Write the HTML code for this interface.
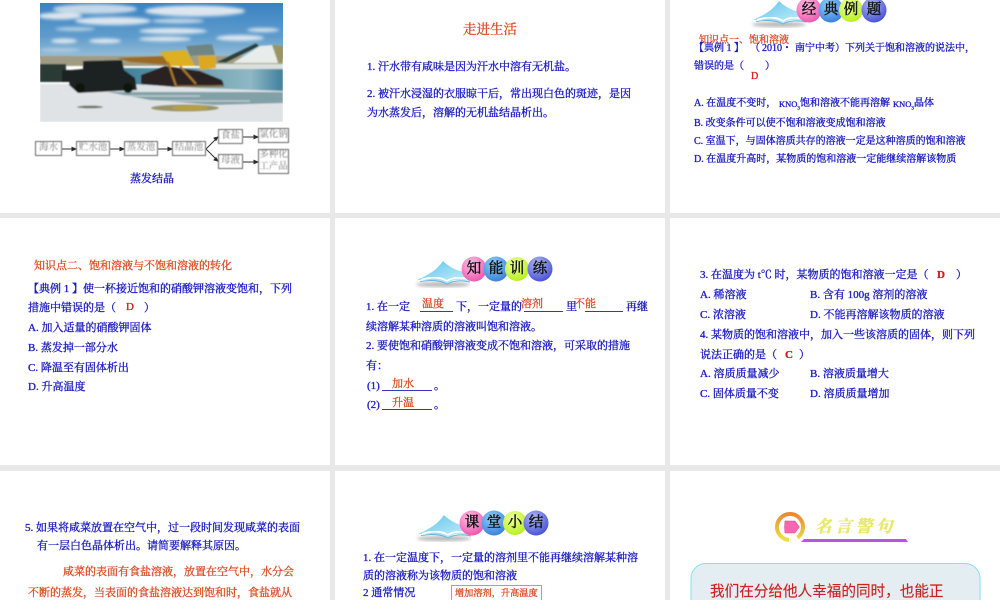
<!DOCTYPE html>
<html lang="zh"><head><meta charset="utf-8"><title>饱和溶液</title>
<style>
html,body{margin:0;padding:0;background:#e8e8e8}
#p{position:relative;width:1000px;height:600px;overflow:hidden;background:#e8e8e8}
.s{position:absolute;background:#fff}
svg.g{position:absolute;left:0;top:0}
.t{position:absolute;white-space:pre;line-height:14px;height:14px;margin-top:1px;font-family:"Liberation Serif","Noto Serif CJK SC",serif;font-size:11px;color:#1c1cc0;-webkit-text-stroke:.35px currentColor;filter:blur(.35px)}
.o{color:#dc4f28}.r{color:#cc2020}.m{font-size:10px}
.k{font-size:8.500px}.k sub{font-size:5px;line-height:0}
.u{position:absolute;height:1px;background:#3a3ab0}
.b{position:absolute;width:24px;text-align:center;line-height:24px;font-size:14.500px;color:#111;font-family:"Liberation Serif","Noto Serif CJK SC",serif;-webkit-text-stroke:.45px #111;filter:blur(.3px)}
.f{position:absolute;box-sizing:border-box;border:1.300px solid #666;background:#fff;color:#777;display:flex;justify-content:center;white-space:nowrap;font:9.500px/13px "Liberation Serif","Noto Serif CJK SC",serif;filter:blur(.4px)}
</style></head><body><div id="p">
<div class="s" style="left:0;top:0;width:330px;height:213px"></div>
<div class="s" style="left:335px;top:0;width:330px;height:213px"></div>
<div class="s" style="left:670px;top:0;width:330px;height:213px"></div>
<div class="s" style="left:0;top:218px;width:330px;height:247px"></div>
<div class="s" style="left:335px;top:218px;width:330px;height:247px"></div>
<div class="s" style="left:670px;top:218px;width:330px;height:247px"></div>
<div class="s" style="left:0;top:471px;width:330px;height:129px"></div>
<div class="s" style="left:335px;top:471px;width:330px;height:129px"></div>
<div class="s" style="left:670px;top:471px;width:330px;height:129px"></div>

<svg class="g" width="1000" height="600" viewBox="0 0 1000 600">
<defs>
<linearGradient id="sky" x1="0" y1="0" x2="0" y2="1"><stop offset="0" stop-color="#3a82c2"/><stop offset=".6" stop-color="#5f9ccc"/><stop offset="1" stop-color="#9cc0d8"/></linearGradient>
<linearGradient id="wat" x1="0" y1="0" x2="1" y2="0"><stop offset="0" stop-color="#3f7f98"/><stop offset=".8" stop-color="#8fb8c4"/><stop offset="1" stop-color="#3f7f9c"/></linearGradient>
<linearGradient id="pg" x1="0" y1="0" x2="1" y2="1"><stop offset="0" stop-color="#58c4ec"/><stop offset="1" stop-color="#d0f0fa"/></linearGradient>
<linearGradient id="rg" x1="0" y1="0" x2="1" y2="0"><stop offset="0" stop-color="#e88a30"/><stop offset="1" stop-color="#ece040"/></linearGradient>
<radialGradient id="b1" cx=".4" cy=".3" r=".8"><stop offset="0" stop-color="#ffc0e4"/><stop offset="1" stop-color="#ee4aa8"/></radialGradient>
<radialGradient id="b2" cx=".4" cy=".3" r=".8"><stop offset="0" stop-color="#90d0f8"/><stop offset="1" stop-color="#2f78d8"/></radialGradient>
<radialGradient id="b3" cx=".4" cy=".3" r=".8"><stop offset="0" stop-color="#f0ffa0"/><stop offset="1" stop-color="#b0ee10"/></radialGradient>
<radialGradient id="b4" cx=".4" cy=".3" r=".8"><stop offset="0" stop-color="#b0b8f8"/><stop offset="1" stop-color="#3c46d0"/></radialGradient>
<filter id="bl"><feGaussianBlur stdDeviation=".8"/></filter>
<filter id="bc"><feGaussianBlur stdDeviation="1.6"/></filter>
<filter id="bs"><feGaussianBlur stdDeviation="1.5"/></filter>
<filter id="bb"><feGaussianBlur stdDeviation=".35"/></filter>
<g id="book">
<ellipse cx="27" cy="24.500" rx="27" ry="2.6" fill="#b8b8b8" filter="url(#bs)"/>
<path d="M1 20 C12 15 20 11 27 1 C33 7 42 12 54 13 L54 23 C44 19 36 19 31 24 C22 20 12 20 1 20Z" fill="url(#pg)" filter="url(#bb)"/>
<path d="M5 20 C14 17 23 16 31 21 C37 17 44 17 54 19" fill="none" stroke="#fff" stroke-width="1.8" filter="url(#bb)"/>
<path d="M4 21.500 C14 20 24 20 31 24 C37 20.500 45 20 54 22" fill="none" stroke="#58b0dc" stroke-width=".8" filter="url(#bb)"/>
</g>
</defs>
<!-- photo -->
<svg x="40" y="3" width="243" height="119" viewBox="40 3 243 119">
<rect x="40" y="3" width="243" height="56" fill="url(#sky)"/>
<g fill="#dce6ee" filter="url(#bc)">
<ellipse cx="95" cy="9" rx="42" ry="5" opacity=".85"/><ellipse cx="60" cy="16" rx="22" ry="3.500"/><ellipse cx="113" cy="21" rx="38" ry="4"/><ellipse cx="195" cy="11" rx="50" ry="5.500"/><ellipse cx="178" cy="21" rx="26" ry="2.500" opacity=".8"/><ellipse cx="173" cy="31" rx="34" ry="3"/><ellipse cx="165" cy="39" rx="26" ry="2.500"/><ellipse cx="64" cy="41" rx="13" ry="2.500"/><ellipse cx="105" cy="41" rx="16" ry="2.500"/><ellipse cx="240" cy="38" rx="24" ry="3"/><ellipse cx="263" cy="30" rx="16" ry="2"/><ellipse cx="75" cy="29" rx="20" ry="2" opacity=".7"/><ellipse cx="60" cy="50" rx="20" ry="2" opacity=".5"/>
</g>
<g filter="url(#bl)">
<rect x="40" y="56" width="243" height="10" fill="#a09c84"/>
<rect x="120" y="68" width="163" height="24" fill="url(#wat)"/>
<rect x="200" y="64" width="83" height="5" fill="#dce0dc"/>
<path d="M40 84 L130 84 L200 88 L283 91 L283 122 L40 122Z" fill="#dfe3e6"/>
<path d="M107 92 L283 92 L283 103 L215 105 L150 100Z" fill="#82a0a8"/>
<path d="M115 96H200M150 101H250M60 94H100" stroke="#e4e6e6" stroke-width="1.200" opacity=".7"/>
<ellipse cx="185" cy="108" rx="34" ry="3.500" fill="#9a9468"/>
<ellipse cx="190" cy="108" rx="18" ry="2.500" fill="#b8a040"/>
<ellipse cx="90" cy="107" rx="13" ry="1.300" fill="#6a6a5a"/>
<path d="M233 63 L260 46 L273 45 L278 63Z" fill="#e8ecea"/>
<path d="M272 45 L283 46 L283 62 L278 62Z" fill="#9a9460"/>
<path d="M218 62 L256 44 L258 46 L226 62Z" fill="#2a4038" stroke="#2a4038"/>
<path d="M117 58 L165 56 L168 65 L130 62Z" fill="#9a6a20"/>
<path d="M160 52 L186 50 L195 66 L170 66Z" fill="#dcb020"/>
<path d="M186 46 L212 44 L215 55 L190 56Z" fill="#6a7a70" opacity=".8"/>
<path d="M198 56 L216 56 L216 68 L200 70Z" fill="#dca820"/>
<path d="M141 75 L165 66 L200 71 L222 80 L224 85 L175 87 L141 84Z" fill="#2a2420"/>
<path d="M168 62 L176 86 M180 66 L196 84" stroke="#b07a28" stroke-width="2"/>
<path d="M176 86H224" stroke="#8a6428" stroke-width="1.500"/>
<path d="M83 61 L122 60 L124 70 L135 78 L137 90 L78 93 L69 85 L71 70 L83 69Z" fill="#1c2420"/>
<circle cx="80" cy="88" r="5" fill="#101410"/><circle cx="128" cy="88" r="5" fill="#101410"/>
<rect x="40" y="64" width="26" height="18" fill="#2a3a36"/>
<rect x="62" y="70" width="9" height="12" fill="#1a2420"/>
</g></svg>
<!-- flow arrows -->
<g stroke="#333" stroke-width="1" fill="#222" filter="url(#bb)">
<path d="M62 149H76M110 149H124M158 149H172M206 149L218 137M206 149L218 161M243 137H258M243 162H258" fill="none"/>
<path d="M76 149l-4-1.6v3.2zM124 149l-4-1.6v3.2zM172 149l-4-1.6v3.2zM218 137l-4 1 2 2.4zM218 161l-4-1 2-2.4zM258 137l-4-1.6v3.2zM258 162l-4-1.6v3.2z"/>
</g>
<!-- headers -->
<use href="#book" x="752" y="0"/>
<circle cx="809" cy="10" r="12.500" fill="url(#b1)"/><circle cx="831" cy="10" r="12.500" fill="url(#b2)"/><circle cx="851" cy="10" r="12" fill="url(#b3)"/><circle cx="874" cy="10" r="12.500" fill="url(#b4)"/>
<use href="#book" x="416" y="260"/>
<circle cx="474" cy="269" r="12.500" fill="url(#b1)"/><circle cx="496" cy="269" r="12.500" fill="url(#b2)"/><circle cx="517" cy="269" r="12" fill="url(#b3)"/><circle cx="540" cy="269" r="12.500" fill="url(#b4)"/>
<use href="#book" x="417" y="514"/>
<circle cx="472" cy="523" r="12.500" fill="url(#b1)"/><circle cx="494" cy="523" r="12.500" fill="url(#b2)"/><circle cx="515" cy="523" r="12" fill="url(#b3)"/><circle cx="536" cy="523" r="12.500" fill="url(#b4)"/>
<!-- quote header -->
<circle cx="790" cy="527" r="13" fill="none" stroke="url(#rg)" stroke-width="4" stroke-dasharray="72 10" transform="rotate(95 790 527)"/>
<path d="M785 521H795L799.500 527 795 533H785Q784 527 785 521Z" fill="#f868b0" stroke="#d04890" stroke-width=".5"/>
<path d="M801 542 L804 539 H906 L908 542Z" fill="#c050e0"/>
<rect x="691" y="563.500" width="289" height="60" rx="15" fill="#e4edf2" stroke="#84e2ee" stroke-width="1"/>
</svg>

<!-- slide 1 -->
<div class="f" style="left:35px;top:141px;width:27px;height:15px">海水</div>
<div class="f" style="left:76px;top:141px;width:34px;height:15px">贮水池</div>
<div class="f" style="left:124px;top:141px;width:34px;height:15px">蒸发池</div>
<div class="f" style="left:172px;top:141px;width:34px;height:15px">结晶池</div>
<div class="f" style="left:218px;top:129px;width:25px;height:15px">食盐</div>
<div class="f" style="left:258px;top:128px;width:31px;height:15px">氯化钠</div>
<div class="f" style="left:218px;top:154px;width:25px;height:15px">母液</div>
<div class="f" style="left:258px;top:149px;width:31px;height:25px;line-height:11.500px"><span>多种化<br>工产品</span></div>
<div class="t" style="left:130px;top:171px">蒸发结晶</div>

<!-- slide 2 -->
<div class="t o" style="left:463px;top:22px;font-size:13.500px">走进生活</div>
<div class="t" style="left:367px;top:59px">1. 汗水带有咸味是因为汗水中溶有无机盐。</div>
<div class="t" style="left:367px;top:86px">2. 被汗水浸湿的衣服晾干后，常出现白色的斑迹，是因</div>
<div class="t" style="left:367px;top:105px">为水蒸发后，溶解的无机盐结晶析出。</div>

<!-- slide 3 -->
<div class="b" style="left:797px;top:-2px">经</div><div class="b" style="left:819px;top:-2px">典</div><div class="b" style="left:839px;top:-2px">例</div><div class="b" style="left:862px;top:-2px">题</div>
<div class="t o m" style="left:699px;top:33px">知识点一、饱和溶液</div>
<div class="t m" style="left:694px;top:41px">【典例 1 】</div>
<div class="t m" style="left:750px;top:41px">（</div><div class="t m" style="left:762px;top:41px">2010・</div><div class="t m" style="left:795px;top:41px">南宁中考）</div><div class="t m" style="left:845px;top:41px">下列关于饱和溶液的说法中，</div>
<div class="t m" style="left:694px;top:59px">错误的是（</div><div class="t m" style="left:765px;top:59px">）</div>
<div class="t r m" style="left:751px;top:69px">D</div>
<div class="t m" style="left:694px;top:96px">A. 在温度不变时，</div><div class="t k" style="left:779px;top:96px">KNO<sub>3</sub></div><div class="t m" style="left:800px;top:96px">饱和溶液不能再溶解</div><div class="t k" style="left:893px;top:96px">KNO<sub>3</sub></div><div class="t m" style="left:914px;top:96px">晶体</div>
<div class="t m" style="left:694px;top:116px">B. 改变条件可以使不饱和溶液变成饱和溶液</div>
<div class="t m" style="left:694px;top:134px">C. 室温下，与固体溶质共存的溶液一定是这种溶质的饱和溶液</div>
<div class="t m" style="left:694px;top:152px">D. 在温度升高时，某物质的饱和溶液一定能继续溶解该物质</div>

<!-- slide 4 -->
<div class="t o" style="left:34px;top:258px">知识点二、饱和溶液与不饱和溶液的转化</div>
<div class="t" style="left:28px;top:281px">【典例 1 】使一杯接近饱和的硝酸钾溶液变饱和，下列</div>
<div class="t" style="left:28px;top:300px">措施中错误的是（</div><div class="t" style="left:144px;top:300px">）</div>
<div class="t r" style="left:126px;top:299px">D</div>
<div class="t" style="left:28px;top:320px">A. 加入适量的硝酸钾固体</div>
<div class="t" style="left:28px;top:340px">B. 蒸发掉一部分水</div>
<div class="t" style="left:28px;top:360px">C. 降温至有固体析出</div>
<div class="t" style="left:28px;top:379px">D. 升高温度</div>

<!-- slide 5 -->
<div class="b" style="left:462px;top:257px">知</div><div class="b" style="left:484px;top:257px">能</div><div class="b" style="left:505px;top:257px">训</div><div class="b" style="left:528px;top:257px">练</div>
<div class="t" style="left:366px;top:299px">1. 在一定</div>
<div class="t o" style="left:422px;top:296px">温度</div><div class="u" style="left:420px;top:311px;width:33px"></div>
<div class="t" style="left:456px;top:299px">下，一定量的</div>
<div class="t o" style="left:521px;top:296px">溶剂</div><div class="u" style="left:524px;top:311px;width:39px"></div>
<div class="t" style="left:566px;top:299px">里</div>
<div class="t o" style="left:574px;top:296px">不能</div><div class="u" style="left:585px;top:311px;width:38px"></div>
<div class="t" style="left:626px;top:299px">再继</div>
<div class="t" style="left:366px;top:319px">续溶解某种溶质的溶液叫饱和溶液。</div>
<div class="t" style="left:366px;top:338px">2. 要使饱和硝酸钾溶液变成不饱和溶液，可采取的措施</div>
<div class="t" style="left:366px;top:358px">有：</div>
<div class="t" style="left:367px;top:378px">(1)</div><div class="u" style="left:382px;top:390px;width:50px"></div>
<div class="t o" style="left:392px;top:376px">加水</div><div class="t" style="left:434px;top:378px">。</div>
<div class="t" style="left:367px;top:397px">(2)</div><div class="u" style="left:382px;top:409px;width:50px"></div>
<div class="t o" style="left:392px;top:395px">升温</div><div class="t" style="left:434px;top:397px">。</div>

<!-- slide 6 -->
<div class="t" style="left:700px;top:267px">3. 在温度为 t℃ 时，某物质的饱和溶液一定是（</div>
<div class="t r" style="left:937px;top:267px;font-weight:700">D</div><div class="t" style="left:956px;top:267px">）</div>
<div class="t" style="left:700px;top:287px">A. 稀溶液</div><div class="t" style="left:810px;top:287px">B. 含有 100g 溶剂的溶液</div>
<div class="t" style="left:700px;top:307px">C. 浓溶液</div><div class="t" style="left:810px;top:307px">D. 不能再溶解该物质的溶液</div>
<div class="t" style="left:700px;top:327px">4. 某物质的饱和溶液中，加入一些该溶质的固体，则下列</div>
<div class="t" style="left:700px;top:347px">说法正确的是（</div>
<div class="t r" style="left:785px;top:347px;font-weight:700">C</div><div class="t" style="left:799px;top:347px">）</div>
<div class="t" style="left:700px;top:366px">A. 溶质质量减少</div><div class="t" style="left:810px;top:366px">B. 溶液质量增大</div>
<div class="t" style="left:700px;top:386px">C. 固体质量不变</div><div class="t" style="left:810px;top:386px">D. 溶质质量增加</div>

<!-- slide 7 -->
<div class="t" style="left:25px;top:520px">5. 如果将咸菜放置在空气中，过一段时间发现咸菜的表面</div>
<div class="t" style="left:37px;top:538px">有一层白色晶体析出。请简要解释其原因。</div>
<div class="t o" style="left:63px;top:564px">咸菜的表面有食盐溶液，放置在空气中，水分会</div>
<div class="t o" style="left:28px;top:585px">不断的蒸发，当表面的食盐溶液达到饱和时，食盐就从</div>

<!-- slide 8 -->
<div class="b" style="left:460px;top:511px">课</div><div class="b" style="left:482px;top:511px">堂</div><div class="b" style="left:503px;top:511px">小</div><div class="b" style="left:524px;top:511px">结</div>
<div class="t" style="left:363px;top:550px">1. 在一定温度下，一定量的溶剂里不能再继续溶解某种溶</div>
<div class="t" style="left:363px;top:568px">质的溶液称为该物质的饱和溶液</div>
<div class="t" style="left:363px;top:585px">2 通常情况</div>
<div class="s" style="left:451px;top:585px;width:89px;height:14px;border:1px solid #8aa6c8"></div>
<div class="t o" style="left:455px;top:585px;font-size:9.200px">增加溶剂，升高温度</div>

<!-- slide 9 -->
<div class="t" style="left:815px;top:516px;height:20px;line-height:20px;font-size:16.500px;letter-spacing:3.800px;font-style:italic;font-weight:700;color:#e8e868;-webkit-text-stroke:.4px #e8e868">名言警句</div>
<div class="t" style="left:710px;top:583px;height:16px;line-height:16px;font-family:'Liberation Sans','Noto Sans CJK SC',sans-serif;font-size:14.600px;color:#cc2222;-webkit-text-stroke:.15px #cc2222">我们在分给他人幸福的同时，也能正</div>
</div></body></html>
